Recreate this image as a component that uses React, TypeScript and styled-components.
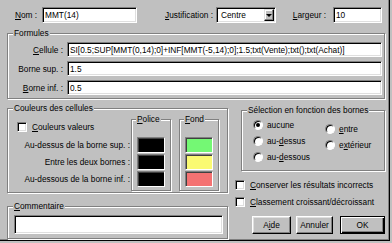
import React from "react";
import styled, { createGlobalStyle } from "styled-components";

const GlobalStyle = createGlobalStyle`
  html, body { margin: 0; padding: 0; background: #c0c0c0; }
  body {
    font-family: "Liberation Sans", Arial, sans-serif;
    font-size: 8.3px;
    color: #000;
  }
  * { box-sizing: border-box; }
  u { text-underline-offset: 1px; }
`;

const Dialog = styled.div`
  width: 390px;
  height: 241px;
  background: #c0c0c0;
  border-right: 1px solid #000;
  border-bottom: 1px solid #000;
  box-shadow: inset -1px -1px 0 #808080;
  padding: 7px 4px 0 7px;
  display: flex;
  flex-direction: column;
`;

const TopRow = styled.div`
  display: flex;
  align-items: center;
  height: 16px;
  padding-left: 8px;
`;

const Label = styled.label<{ $w: number; $right?: boolean; $pr?: number }>`
  width: ${(p) => p.$w}px;
  flex: none;
  text-align: ${(p) => (p.$right ? "right" : "left")};
  padding-right: ${(p) => p.$pr ?? 0}px;
  white-space: nowrap;
`;

const Field = styled.input<{ $w?: number; $h?: number }>`
  width: ${(p) => (p.$w ? `${p.$w}px` : "100%")};
  height: ${(p) => p.$h ?? 16}px;
  flex: none;
  margin: 0;
  padding: 0 2px;
  border: 1px solid;
  border-color: #808080 #fff #fff #808080;
  box-shadow: inset 1px 1px 0 #000, inset -1px -1px 0 #dfdfdf;
  background: #fff;
  font: inherit;
  color: #000;
  outline: none;
`;

const Select = styled.div`
  width: 60px;
  height: 16px;
  flex: none;
  display: flex;
  align-items: center;
  padding: 2px 1px 2px 4px;
  border: 1px solid;
  border-color: #808080 #fff #fff #808080;
  box-shadow: inset 1px 1px 0 #000, inset -1px -1px 0 #dfdfdf;
  background: #fff;
`;

const SelectText = styled.span`
  flex: 1;
`;

const DropButton = styled.span`
  width: 10px;
  height: 12px;
  display: flex;
  align-items: center;
  justify-content: center;
  background: #c0c0c0;
  border: 1px solid;
  border-color: #dfdfdf #000 #000 #dfdfdf;
  box-shadow: inset -1px -1px 0 #808080, inset 1px 1px 0 #fff;
`;

const Arrow = styled.span`
  width: 0;
  height: 0;
  border-left: 3px solid transparent;
  border-right: 3px solid transparent;
  border-top: 3px solid #000;
`;

const Group = styled.div<{ $h: number }>`
  position: relative;
  height: ${(p) => p.$h}px;
  border: 1px solid #808080;
  box-shadow: inset 1px 1px 0 #fff, 1px 1px 0 #fff;
`;

const Caption = styled.span<{ $left: number }>`
  position: absolute;
  top: -6px;
  left: ${(p) => p.$left}px;
  padding: 0 1px;
  line-height: 11px;
  background: #c0c0c0;
  white-space: nowrap;
`;

const FormulesGroup = styled(Group)`
  margin-top: 10px;
  padding: 8px 2px 3px 0;
  display: grid;
  grid-template-columns: 59px 1fr;
  grid-auto-rows: 15px;
  row-gap: 4px;
  align-items: center;
`;

const RowLabel = styled.label`
  text-align: right;
  padding-right: 4px;
  white-space: nowrap;
`;

const Bottom = styled.div`
  display: grid;
  grid-template-columns: 221px 150px;
  column-gap: 7px;
  margin-top: 1px;
`;

const Column = styled.div`
  display: flex;
  flex-direction: column;
`;

const ColorsGroup = styled(Group)`
  margin-top: 8px;
  padding: 10px 8px 1px 0;
  display: flex;
`;

const LabelsCol = styled.div`
  width: 123px;
  flex: none;
  display: flex;
  flex-direction: column;
  padding-top: 3px;
`;

const CheckRow = styled.div<{ $mt?: number; $ml?: number }>`
  display: flex;
  align-items: center;
  gap: 5px;
  height: 10px;
  margin-top: ${(p) => p.$mt ?? 0}px;
  margin-left: ${(p) => p.$ml ?? 0}px;
  white-space: nowrap;
`;

const CheckBox = styled.span`
  width: 10px;
  height: 10px;
  flex: none;
  background: #fff;
  border: 1px solid;
  border-color: #808080 #fff #fff #808080;
  box-shadow: inset 1px 1px 0 #000, inset -1px -1px 0 #dfdfdf;
`;

const ColorLabels = styled.div`
  display: flex;
  flex-direction: column;
  gap: 1px;
  margin-top: 5px;
`;

const ColorLabel = styled.div`
  height: 16px;
  line-height: 16px;
  text-align: right;
  padding-right: 1px;
  white-space: nowrap;
`;

const SubGroup = styled(Group)<{ $ml?: number }>`
  width: 40px;
  flex: none;
  margin-left: ${(p) => p.$ml ?? 0}px;
  padding: 17px 0 0 5px;
  display: flex;
  flex-direction: column;
  gap: 1px;
`;

const Swatch = styled.div<{ $color: string }>`
  width: 28px;
  height: 16px;
  background: ${(p) => p.$color};
  border: 1px solid;
  border-color: #808080 #fff #fff #808080;
  box-shadow: inset 1px 1px 0 #404040;
`;

const CommentGroup = styled(Group)`
  margin-top: 13px;
  padding: 8px 4px 0 6px;
`;

const SelectionGroup = styled(Group)`
  margin: 10px 0 0 6px;
  padding: 6px 0 0 11px;
  display: flex;
`;

const RadioCol = styled.div<{ $w?: number; $mt?: number }>`
  width: ${(p) => (p.$w ? `${p.$w}px` : "auto")};
  margin-top: ${(p) => p.$mt ?? 0}px;
  display: flex;
  flex-direction: column;
`;

const RadioItem = styled.div`
  display: flex;
  align-items: center;
  gap: 4px;
  height: 16px;
  white-space: nowrap;
`;

const RadioCircle = styled.span<{ $checked?: boolean }>`
  width: 10px;
  height: 10px;
  flex: none;
  border-radius: 50%;
  background: #fff;
  border: 1px solid;
  border-color: #808080 #fff #fff #808080;
  box-shadow: inset 1px 1px 0 #000;
  display: flex;
  align-items: center;
  justify-content: center;
  &::after {
    content: "";
    width: 4px;
    height: 4px;
    border-radius: 50%;
    background: #000;
    display: ${(p) => (p.$checked ? "block" : "none")};
  }
`;

const Buttons = styled.div`
  display: flex;
  justify-content: flex-end;
  gap: 5px;
  margin-top: 9px;
`;

const Button = styled.button<{ $w: number; $default?: boolean }>`
  width: ${(p) => p.$w}px;
  height: 18px;
  margin: 0 0 0 ${(p) => (p.$default ? 2 : 0)}px;
  padding: 0;
  font: inherit;
  color: #000;
  background: #c0c0c0;
  border: 1px solid;
  border-color: ${(p) => (p.$default ? "#000" : "#fff #000 #000 #fff")};
  box-shadow: ${(p) =>
    p.$default
      ? "inset 1px 1px 0 #fff, inset -1px -1px 0 #000, inset -2px -2px 0 #808080"
      : "inset -1px -1px 0 #808080, inset 1px 1px 0 #dfdfdf"};
`;

export default function App() {
  return (
    <>
      <GlobalStyle />
      <Dialog>
        <TopRow>
          <Label $w={27}>
            <u>N</u>om :
          </Label>
          <Field $w={95} readOnly value="MMT(14)" />
          <Label $w={79} $right $pr={3}>
            <u>J</u>ustification :
          </Label>
          <Select>
            <SelectText>Centre</SelectText>
            <DropButton>
              <Arrow />
            </DropButton>
          </Select>
          <Label $w={57} $right $pr={7}>
            <u>L</u>argeur :
          </Label>
          <Field $w={49} readOnly value="10" />
        </TopRow>

        <FormulesGroup $h={66}>
          <Caption $left={5}>Formules</Caption>
          <RowLabel>
            <u>C</u>ellule :
          </RowLabel>
          <Field
            $h={15}
            readOnly
            value="SI[0.5;SUP[MMT(0,14);0]+INF[MMT(-5,14);0];1.5;txt(Vente);txt();txt(Achat)]"
          />
          <RowLabel>Borne sup. :</RowLabel>
          <Field $h={15} readOnly value="1.5" />
          <RowLabel>
            <u>B</u>orne inf. :
          </RowLabel>
          <Field $h={15} readOnly value="0.5" />
        </FormulesGroup>

        <Bottom>
          <Column>
            <ColorsGroup $h={85}>
              <Caption $left={5}>Couleurs des cellules</Caption>
              <LabelsCol>
                <CheckRow $ml={9}>
                  <CheckBox />
                  <span>
                    <u>C</u>ouleurs valeurs
                  </span>
                </CheckRow>
                <ColorLabels>
                  <ColorLabel>Au-dessus de la borne sup. :</ColorLabel>
                  <ColorLabel>Entre les deux bornes :</ColorLabel>
                  <ColorLabel>Au-dessous de la borne inf. :</ColorLabel>
                </ColorLabels>
              </LabelsCol>
              <SubGroup $h={72}>
                <Caption $left={4}>
                  <u>P</u>olice
                </Caption>
                <Swatch $color="#000" />
                <Swatch $color="#000" />
                <Swatch $color="#000" />
              </SubGroup>
              <SubGroup $h={72} $ml={8}>
                <Caption $left={4}>
                  <u>F</u>ond
                </Caption>
                <Swatch $color="#74f874" />
                <Swatch $color="#fafa72" />
                <Swatch $color="#f47272" />
              </SubGroup>
            </ColorsGroup>
            <CommentGroup $h={33}>
              <Caption $left={5}>
                <u>C</u>ommentaire
              </Caption>
              <Field $h={19} readOnly value="" />
            </CommentGroup>
          </Column>

          <Column>
            <SelectionGroup $h={61}>
              <Caption $left={5}>Sélection en fonction des bornes</Caption>
              <RadioCol $w={72}>
                <RadioItem>
                  <RadioCircle $checked />
                  <span>aucune</span>
                </RadioItem>
                <RadioItem>
                  <RadioCircle />
                  <span>
                    au-<u>d</u>essus
                  </span>
                </RadioItem>
                <RadioItem>
                  <RadioCircle />
                  <span>
                    au-<u>d</u>essous
                  </span>
                </RadioItem>
              </RadioCol>
              <RadioCol $mt={4}>
                <RadioItem>
                  <RadioCircle />
                  <span>
                    <u>e</u>ntre
                  </span>
                </RadioItem>
                <RadioItem>
                  <RadioCircle />
                  <span>
                    e<u>x</u>térieur
                  </span>
                </RadioItem>
              </RadioCol>
            </SelectionGroup>
            <CheckRow $mt={9}>
              <CheckBox />
              <span>
                <u>C</u>onserver les résultats incorrects
              </span>
            </CheckRow>
            <CheckRow $mt={7}>
              <CheckBox />
              <span>
                <u>C</u>lassement croissant/décroissant
              </span>
            </CheckRow>
            <Buttons>
              <Button $w={39}>
                A<u>i</u>de
              </Button>
              <Button $w={37}>Annuler</Button>
              <Button $w={45} $default>
                OK
              </Button>
            </Buttons>
          </Column>
        </Bottom>
      </Dialog>
    </>
  );
}
